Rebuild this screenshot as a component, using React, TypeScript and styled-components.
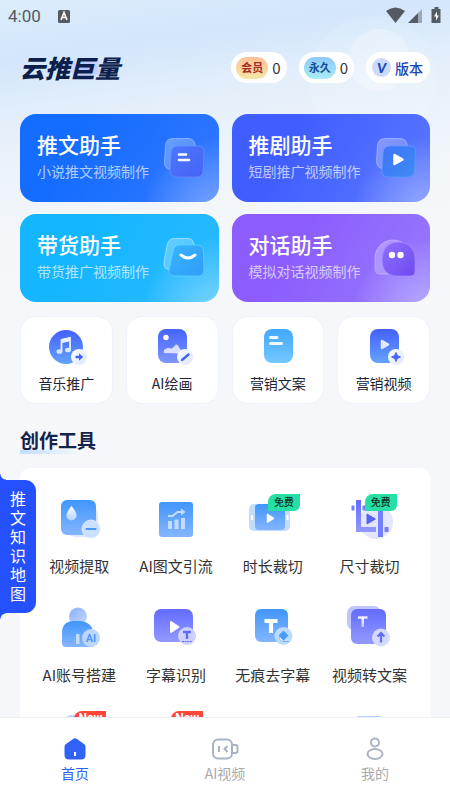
import React from "react";
import styled, { createGlobalStyle, css } from "styled-components";

const GlobalStyle = createGlobalStyle`
  * { box-sizing: border-box; }
  body {
    margin: 0;
    font-family: "Noto Sans CJK SC", "Noto Sans", sans-serif;
    color: #333;
  }
  button { font: inherit; color: inherit; border: 0; padding: 0; margin: 0; background: none; cursor: pointer; }
  svg { display: block; flex: none; }
  h1, h2, p { margin: 0; }
`;

const Page = styled.div`
  position: relative;
  display: flex;
  flex-direction: column;
  height: 100vh;
  overflow: hidden;
  background: linear-gradient(172deg, #dcecfb 0, #d3e6fc 60px, #e6f0fa 130px, #f4f7fa 240px, #f6f7fa 320px);
`;

const Orbs = styled.svg`
  position: absolute;
  top: 0;
  right: 0;
`;

const StatusBar = styled.div`
  position: relative;
  display: flex;
  align-items: center;
  height: 32px;
  padding: 0 8px;
  color: #555b63;
  font: 17px/32px Roboto, sans-serif;
`;

const StatusIcons = styled.div`
  display: flex;
  margin-left: auto;
`;

const StatusApp = styled.svg`
  margin-left: 16px;
`;

const Header = styled.header`
  position: relative;
  display: flex;
  align-items: center;
  gap: 12px;
  padding: 20px 20px 31px;
`;

const Brand = styled.h1`
  margin-right: auto;
  font-size: 25px;
  line-height: 31px;
  font-weight: 900;
  font-style: italic;
  color: #0c1f4d;
  white-space: nowrap;
  background: radial-gradient(ellipse 20px 12px at 66px 16px, #aebcff 0, #c5d2ff 60%, transparent 100%);
`;

const Pill = styled.button`
  display: flex;
  align-items: center;
  gap: 4px;
  height: 31px;
  padding: 0 6px 0 5px;
  border-radius: 16px;
  background: #fff;
  font-size: 15px;
  line-height: 28px;
  white-space: nowrap;
`;

const Tag = styled.span<{ $tone: "gold" | "sky" }>`
  height: 22px;
  padding: 0 5px;
  border-radius: 11px;
  font-size: 11px;
  line-height: 21px;
  font-weight: 700;
  ${(p) =>
    p.$tone === "gold"
      ? css`color: #a12c26; background: linear-gradient(#ffc199, #f5e6a5);`
      : css`color: #174a90; background: linear-gradient(#8ec8ff, #a9ecf3);`}
`;

const Version = styled(Pill)`
  padding: 0 7px 0 6px;
  font-size: 14px;
  font-weight: 500;
  color: #1a46b8;
`;

const VersionMark = styled.span`
  width: 19px;
  height: 19px;
  border-radius: 50%;
  background: #cbd9fb;
  font: italic 900 14px/19px Lato, sans-serif;
  text-align: center;
`;

const Content = styled.main`
  position: relative;
  flex: 1;
  min-height: 0;
  overflow-y: auto;
  scrollbar-width: none;
  padding: 0 20px;
`;

const HeroGrid = styled.div`
  display: grid;
  grid-template-columns: 1fr 1fr;
  gap: 12px 13px;
`;

const HeroCard = styled.button<{ $from: string; $to: string; $glow: string }>`
  display: flex;
  align-items: center;
  justify-content: space-between;
  height: 88px;
  padding: 0 14px 0 17px;
  border-radius: 16px;
  text-align: left;
  color: #fff;
  background:
    radial-gradient(circle at 100% 115%, ${(p) => p.$glow} 0, transparent 78px),
    linear-gradient(120deg, ${(p) => p.$from} 30%, ${(p) => p.$to});
`;

const HeroText = styled.span`
  display: flex;
  flex-direction: column;
  gap: 2px;
  padding-bottom: 5px;
  white-space: nowrap;
`;

const HeroTitle = styled.span`
  font-size: 21px;
  line-height: 28px;
  font-weight: 500;
`;

const HeroNote = styled.span`
  font-size: 14px;
  line-height: 22px;
  opacity: 0.65;
`;

const QuickGrid = styled.div`
  display: grid;
  grid-template-columns: repeat(4, 1fr);
  gap: 13px;
  margin-top: 14px;
`;

const QuickCard = styled.button`
  display: flex;
  flex-direction: column;
  align-items: center;
  gap: 5px;
  height: 88px;
  padding-top: 10px;
  border: 1px solid #eef3fb;
  border-radius: 16px;
  background: #fff;
  font-size: 14px;
  line-height: 22px;
  color: #1d2536;
`;

const SectionTitle = styled.h2`
  width: max-content;
  margin: 21px 0 14px;
  font-size: 19px;
  line-height: 29px;
  font-weight: 700;
  color: #13234a;
  background: linear-gradient(90deg, #bfe0ff, transparent 80%) 0 25px / 100% 5px no-repeat;
`;

const ToolPanel = styled.div`
  display: grid;
  grid-template-columns: repeat(4, 1fr);
  row-gap: 22px;
  padding: 24px 12px 24px 11px;
  border-radius: 10px;
  background: #fff;
`;

const Tool = styled.button`
  display: flex;
  flex-direction: column;
  align-items: center;
  gap: 14px;
  height: 87px;
  font-size: 15px;
  line-height: 24px;
  white-space: nowrap;
  color: #333;
`;

const ToolArt = styled.span`
  position: relative;
  width: 56px;
  height: 48px;
`;

const Badge = styled.span<{ $hot?: boolean }>`
  position: absolute;
  top: 2px;
  right: 1px;
  width: 32px;
  height: 17px;
  border-radius: 8px 0 6px 0;
  font-size: 10px;
  line-height: 16px;
  font-weight: 500;
  text-align: center;
  color: #0d3325;
  background: #25dfa4;
  ${(p) =>
    p.$hot &&
    css`
      top: 1px;
      font: 700 12px/15px Roboto, sans-serif;
      color: #fff;
      background: #ff463c;
    `}
`;

const SideTab = styled.button`
  position: absolute;
  left: 0;
  top: 60%;
  width: 36px;
  padding: 9px 10px 10px;
  border-radius: 0 11px 11px 0;
  background: #2450ff;
  color: #fff;
  font-size: 16px;
  line-height: 19px;
  word-break: break-all;
  &::before, &::after {
    content: "";
    position: absolute;
    left: 0;
    width: 6px;
    height: 6px;
  }
  &::before {
    bottom: 100%;
    background: radial-gradient(circle at 100% 0, transparent 5px, #2450ff 6px);
  }
  &::after {
    top: 100%;
    background: radial-gradient(circle at 100% 100%, transparent 5px, #2450ff 6px);
  }
`;

const TabBar = styled.nav`
  position: relative;
  display: grid;
  grid-template-columns: repeat(3, 1fr);
  height: 83px;
  border-top: 1px solid #edeff2;
  background: #fff;
`;

const TabItem = styled.button<{ $active?: boolean }>`
  display: flex;
  flex-direction: column;
  align-items: center;
  gap: 2px;
  padding-top: 19px;
  font-size: 14px;
  line-height: 20px;
  color: ${(p) => (p.$active ? "#2f62f5" : "#aaa")};
`;

const Gradients = () => (
  <svg width="0" height="0" aria-hidden>
    <defs>
      <linearGradient id="indigo" x2="0" y2="1"><stop stopColor="#4464fb" /><stop offset="1" stopColor="#7f96ff" /></linearGradient>
      <linearGradient id="blue" x2="0" y2="1"><stop stopColor="#4096fc" /><stop offset="1" stopColor="#85b5ff" /></linearGradient>
      <linearGradient id="mix" x2="0" y2="1"><stop stopColor="#4460fa" /><stop offset="1" stopColor="#62a3fd" /></linearGradient>
      <linearGradient id="sky" x2="0" y2="1"><stop stopColor="#42a7ff" /><stop offset="1" stopColor="#74c8ff" /></linearGradient>
      <linearGradient id="violet" x2="0" y2="1"><stop stopColor="#636cff" /><stop offset="1" stopColor="#929aff" /></linearGradient>
      <linearGradient id="pale" x2="0" y2="1"><stop stopColor="#fff" /><stop offset="1" stopColor="#fff" stopOpacity=".5" /></linearGradient>
      <linearGradient id="puck" x2="1" y2="1"><stop stopColor="#fafcff" /><stop offset="1" stopColor="#dde6fb" /></linearGradient>
      <linearGradient id="head" x2="1" y2="1"><stop stopColor="#89aefa" /><stop offset="1" stopColor="#c4dcff" /></linearGradient>
      <linearGradient id="glass" x2="1" y2="1"><stop stopColor="#fff" stopOpacity=".32" /><stop offset="1" stopColor="#fff" stopOpacity=".14" /></linearGradient>
      <linearGradient id="h1" x2="1" y2="1"><stop stopColor="#4a78ff" /><stop offset="1" stopColor="#4862f4" /></linearGradient>
      <linearGradient id="h2" x2="1" y2="1"><stop stopColor="#3f74fa" /><stop offset="1" stopColor="#3d8bf4" /></linearGradient>
      <linearGradient id="h3" x2="1" y2="1"><stop stopColor="#38b4ff" /><stop offset="1" stopColor="#2f9df8" /></linearGradient>
      <linearGradient id="h4" x2="1" y2="1"><stop stopColor="#8f70ff" /><stop offset="1" stopColor="#6e4bf0" /></linearGradient>
    </defs>
  </svg>
);

const heroArt = {
  text: (
    <>
      <path d="M10 1.500h15q6 0 7 6l2 17q0 8-7 8H9q-8 0-7.500-8l1-16q.5-7 7.500-7z" fill="url(#glass)" stroke="#a9caff" strokeOpacity=".6" />
      <path d="M15 9h20q6 0 6 6l-1 19q-.5 6-7 6H14q-7 0-7-6l1-18q.5-7 7-7z" fill="url(#h1)" stroke="#6f93ff" strokeOpacity=".6" />
      <path d="M16 17.500h7M16 23h10" stroke="#fff" strokeWidth="2.600" strokeLinecap="round" />
    </>
  ),
  play: (
    <>
      <path d="M11 1.500h15q6 0 7 6l1 17q0 7-7 7H10q-7.500 0-7.500-8l1-15q.5-7 7.500-7z" fill="url(#glass)" stroke="#b9c6ff" strokeOpacity=".6" />
      <path d="M16 9h20q6 0 5.500 6l-1 19q-.5 6-7 6H14q-6 0-6-6l1-18q.5-7 7-7z" fill="url(#h2)" stroke="#69a0ff" strokeOpacity=".6" />
      <path d="M20.500 18v9l8-4.500z" fill="#fff" stroke="#fff" strokeWidth="2.500" strokeLinejoin="round" />
    </>
  ),
  smile: (
    <>
      <path d="M11 1.500h14q5 0 6 6l3 17q0 8-7 8H7q-7 0-6-8l3-16q1.500-7 7-7z" fill="url(#glass)" stroke="#b6e8ff" strokeOpacity=".7" />
      <path d="M16 8h18q6 0 6.500 6l.5 19q0 6-6 6H12q-7 0-6-6l4-18q1-7 6-7z" fill="url(#h3)" stroke="#5cd4fb" strokeOpacity=".8" />
      <path d="M18 18q7 6 14 0" fill="none" stroke="#fff" strokeWidth="3" strokeLinecap="round" />
    </>
  ),
  ghost: (
    <>
      <path d="M1 21a18 18 0 0 1 36 0v16H6q-5 0-5-5z" fill="url(#glass)" stroke="#c9b6ff" strokeOpacity=".7" />
      <path d="M8 22Q9 5 25 5q16 1 16 18v11q0 5-5 5H22Q8 38 8 22z" fill="url(#h4)" stroke="#a68bff" strokeOpacity=".7" />
      <circle cx="18" cy="18" r="3.200" fill="#fff" />
      <circle cx="26.500" cy="18" r="3.200" fill="#fff" />
    </>
  ),
};

const quickArt = {
  music: (
    <>
      <circle cx="24" cy="20" r="17" fill="url(#mix)" />
      <path d="M19.500 24V13l8.500-2v11.500" fill="none" stroke="#eaf1ff" strokeWidth="1.800" />
      <path d="M19.500 12.200l8.500-2v4l-8.500 2z" fill="#eaf1ff" />
      <ellipse cx="17.500" cy="24.500" rx="3" ry="2.300" fill="#dce8ff" />
      <ellipse cx="26" cy="23" rx="3" ry="2.300" fill="#dce8ff" />
      <circle cx="37" cy="30" r="8" fill="url(#puck)" />
      <path d="M33.500 28.800h3.500v-2.600l4.200 3.800-4.200 3.800v-2.600h-3.500z" fill="#4464f5" />
    </>
  ),
  paint: (
    <>
      <rect x="10" y="2" width="29" height="34" rx="8" fill="url(#indigo)" />
      <circle cx="18" cy="10.500" r="2.700" fill="#fff" />
      <path d="M16 26q-1-4 2-4 2-2 4-.5 1-.5 2 0l3-3q1.500-2 3 0l3 5q1 3-2 3z" fill="#fff" opacity=".75" />
      <circle cx="37" cy="30" r="8" fill="url(#puck)" />
      <path d="M34 33l6.500-5.500" stroke="#4464f5" strokeWidth="2.400" strokeLinecap="round" />
    </>
  ),
  copy: (
    <>
      <rect x="10" y="2" width="29" height="34" rx="8" fill="url(#sky)" />
      <path d="M16.500 10.500h6.500M16.500 16.500h11" stroke="#f0f9ff" strokeWidth="3" strokeLinecap="round" />
    </>
  ),
  video: (
    <>
      <rect x="10" y="2" width="29" height="34" rx="8" fill="url(#mix)" />
      <path d="M22 14v7l6-3.500z" fill="#e2e9ff" stroke="#e2e9ff" strokeWidth="2.500" strokeLinejoin="round" />
      <circle cx="36" cy="30" r="8" fill="url(#puck)" />
      <path d="M36 25.500q.6 3.900 4.500 4.500-3.900.6-4.500 4.500-.6-3.900-4.500-4.500 3.900-.6 4.500-4.500z" fill="#4464f5" stroke="#4464f5" />
    </>
  ),
};

const toolArt = {
  extract: (
    <>
      <rect x="14" y="13" width="33" height="32" rx="10" fill="#dbe8ff" />
      <rect x="10" y="8" width="35" height="35" rx="6" fill="url(#blue)" />
      <path d="M20.500 14q5 6 5 9.500a5 5 0 0 1-10 0q0-3.500 5-9.500z" fill="url(#pale)" />
      <circle cx="40" cy="37" r="9" fill="#cbdffe" stroke="#dceaff" />
      <path d="M35.500 37h9" stroke="#4c97fb" strokeWidth="2.200" strokeLinecap="round" />
    </>
  ),
  chart: (
    <>
      <rect x="11" y="10" width="34" height="35" rx="3" fill="url(#blue)" />
      <path d="M20 29h4v8h-4zM26.500 27.500h4V37h-4zM33 26h4v11h-4z" fill="#c3dcff" />
      <path d="M20 24h4.500l5-4H35" fill="none" stroke="#c3dcff" strokeWidth="2.200" />
      <path d="M33 16.500l4.500 3.500-4.500 3.500z" fill="#c3dcff" />
    </>
  ),
  trim: (
    <>
      <rect x="4" y="12" width="41" height="27" rx="5" fill="#c2dbff" />
      <path d="M7 23v5M42.500 23v5" stroke="#fff" strokeWidth="2" />
      <rect x="10" y="12" width="30" height="26" rx="4" fill="url(#blue)" />
      <path d="M22.500 22.500v7.500l6-3.700z" fill="#fff" stroke="#fff" strokeWidth="1.500" strokeLinejoin="round" />
    </>
  ),
  crop: (
    <>
      <circle cx="34" cy="30" r="17" fill="#e4e6ff" />
      <path d="M14 8h5v27h15v5H14z" fill="url(#violet)" />
      <path d="M9.500 13.500h3v5h-3zM20.500 13.500H41V45h-5V18.500H20.500zM42.500 35h4v5h-4z" fill="#757efd" />
      <path d="M25 22v10l8.500-5z" fill="#5761f3" stroke="#5761f3" strokeLinejoin="round" />
    </>
  ),
  account: (
    <>
      <circle cx="27" cy="15.500" r="9" fill="url(#head)" />
      <path d="M11 32q0-12 12-12h7q12 2 12 12v14H15q-4 0-4-4z" fill="url(#blue)" />
      <path d="M25 33h3.500v10H25z" fill="#c5deff" />
      <circle cx="40" cy="37" r="9" fill="#bcd7fe" />
      <text x="40" y="41" textAnchor="middle" fontFamily="Roboto, sans-serif" fontSize="11" fontWeight="700" fill="#5298f8">AI</text>
    </>
  ),
  subtitle: (
    <>
      <rect x="6" y="8" width="39" height="33" rx="7" fill="url(#violet)" />
      <path d="M23 21v10l7.500-5z" fill="#fff" stroke="#fff" strokeWidth="2" strokeLinejoin="round" />
      <circle cx="39" cy="35" r="9" fill="#ccd2fd" />
      <path d="M35 31h8M39 31v7" stroke="#626bf5" strokeWidth="2.400" />
      <path d="M34 40.500h10" stroke="#626bf5" strokeDasharray="2 .6" />
    </>
  ),
  erase: (
    <>
      <rect x="10" y="8" width="33" height="33" rx="6" fill="url(#blue)" />
      <path d="M19.500 20h13M26 20v12" stroke="#fff" strokeWidth="4.200" />
      <circle cx="38.500" cy="35" r="9" fill="#bcdcff" />
      <path d="M38.500 29.500l5 5-5 5-5-5z" fill="#4a9afb" />
      <path d="M35 36l3.500 3.500-1.500 1-3-3zM38 40.500h6" fill="#fff" stroke="#76b2fc" />
    </>
  ),
  convert: (
    <>
      <rect x="5" y="5" width="34" height="24" rx="7" fill="#bfc6ff" />
      <rect x="9" y="8" width="35" height="35" rx="6" fill="url(#violet)" />
      <path d="M16 16.500h9.500" stroke="#eff0ff" strokeWidth="2.400" />
      <path d="M19.500 17h2.500v9h-2.500z" fill="url(#pale)" />
      <circle cx="39" cy="36.500" r="9" fill="#d4d9ff" />
      <path d="M39 41.500v-9M35.500 35.500l3.500-3.500 3.500 3.500" fill="none" stroke="#626bf5" strokeWidth="2.200" />
    </>
  ),
  bubble: <circle cx="21" cy="14" r="9" fill="#b5d1fb" />,
  blank: null,
  sheet: <rect x="14" y="6" width="26" height="34" rx="3" fill="#b3d5ff" />,
};

const heroes = [
  { title: "推文助手", note: "小说推文视频制作", art: "text", from: "#156dff", to: "#3377ff", glow: "#7ea8ff" },
  { title: "推剧助手", note: "短剧推广视频制作", art: "play", from: "#405eff", to: "#5b79ff", glow: "#9caeff" },
  { title: "带货助手", note: "带货推广视频制作", art: "smile", from: "#13b6ff", to: "#2cb9ff", glow: "#80d6ff" },
  { title: "对话助手", note: "模拟对话视频制作", art: "ghost", from: "#8c5cfc", to: "#957bff", glow: "#bbadff" },
] as const;

const quicks = [
  { label: "音乐推广", art: "music" },
  { label: "AI绘画", art: "paint" },
  { label: "营销文案", art: "copy" },
  { label: "营销视频", art: "video" },
] as const;

type ToolEntry = { label: string; art: keyof typeof toolArt; badge?: string; hot?: boolean };

const tools: ToolEntry[] = [
  { label: "视频提取", art: "extract" },
  { label: "AI图文引流", art: "chart" },
  { label: "时长裁切", art: "trim", badge: "免费" },
  { label: "尺寸裁切", art: "crop", badge: "免费" },
  { label: "AI账号搭建", art: "account" },
  { label: "字幕识别", art: "subtitle" },
  { label: "无痕去字幕", art: "erase" },
  { label: "视频转文案", art: "convert" },
  { label: "", art: "bubble", badge: "New", hot: true },
  { label: "", art: "blank", badge: "New", hot: true },
  { label: "", art: "blank" },
  { label: "", art: "sheet" },
];

export default function App() {
  return (
    <>
      <GlobalStyle />
      <Page>
        <Orbs width="150" height="130" aria-hidden>
          <circle cx="73" cy="80" r="64" fill="#fff" opacity=".1" />
          <circle cx="79" cy="60" r="31" fill="#fff" opacity=".28" />
        </Orbs>
        <StatusBar>
          4:00
          <StatusApp width="14" height="14" viewBox="0 0 14 14">
            <rect x="1" y="1" width="12" height="13" rx="1.500" fill="#555b63" />
            <path d="M4 11l3-7.500L10 11M5.200 8.500h3.600" fill="none" stroke="#fff" strokeWidth="1.600" />
          </StatusApp>
          <StatusIcons>
            <svg width="58" height="18" viewBox="0 0 58 18" fill="#555b63">
              <path d="M2 4q9.500-7 19 0l-9.500 12z" />
              <path d="M24 16L34 6v10z" />
              <path d="M34 6l4-4v14h-4z" opacity=".45" />
              <path d="M50.500 0h4v2h2v14h-9V2h3z" />
              <path d="M53 4.500l-3 5h2v4l3-5h-2z" fill="#fff" />
            </svg>
          </StatusIcons>
        </StatusBar>
        <Header>
          <Brand>云推巨量</Brand>
          <Pill><Tag $tone="gold">会员</Tag>0</Pill>
          <Pill><Tag $tone="sky">永久</Tag>0</Pill>
          <Version><VersionMark>V</VersionMark>版本</Version>
        </Header>
        <Content>
          <Gradients />
          <HeroGrid>
            {heroes.map((h) => (
              <HeroCard key={h.title} $from={h.from} $to={h.to} $glow={h.glow}>
                <HeroText>
                  <HeroTitle>{h.title}</HeroTitle>
                  <HeroNote>{h.note}</HeroNote>
                </HeroText>
                <svg width="42" height="42" viewBox="0 0 42 42" aria-hidden>{heroArt[h.art]}</svg>
              </HeroCard>
            ))}
          </HeroGrid>
          <QuickGrid>
            {quicks.map((q) => (
              <QuickCard key={q.label}>
                <svg width="48" height="40" viewBox="0 0 48 40" aria-hidden>{quickArt[q.art]}</svg>
                {q.label}
              </QuickCard>
            ))}
          </QuickGrid>
          <SectionTitle>创作工具</SectionTitle>
          <ToolPanel>
            {tools.map((t, i) => (
              <Tool key={i}>
                <ToolArt>
                  <svg width="56" height="48" viewBox="0 0 56 48" aria-hidden>{toolArt[t.art]}</svg>
                  {t.badge && <Badge $hot={t.hot}>{t.badge}</Badge>}
                </ToolArt>
                {t.label}
              </Tool>
            ))}
          </ToolPanel>
        </Content>
        <SideTab>推文知识地图</SideTab>
        <TabBar>
          <TabItem $active aria-current="page">
            <svg width="28" height="24" viewBox="0 0 28 24" aria-hidden>
              <path d="M12 2q2-1.500 4 0l7 5q1.500 1 1.500 3v8q0 4.500-4.500 4.500H8q-4.500 0-4.500-4.500v-8q0-2 1.500-3z" fill="#2f62f5" />
              <path d="M14 15v4" stroke="#fff" strokeWidth="2" />
            </svg>
            首页
          </TabItem>
          <TabItem>
            <svg width="28" height="24" viewBox="0 0 28 24" fill="none" stroke="#a9b3c6" strokeWidth="2" aria-hidden>
              <rect x="2" y="2.500" width="19" height="19" rx="5" />
              <path d="M22 8h2.500q2 0 2 2v4q0 2-2 2H22M8 9v6M16.500 9L13.500 12l3 3" />
            </svg>
            AI视频
          </TabItem>
          <TabItem>
            <svg width="28" height="24" viewBox="0 0 28 24" fill="none" stroke="#a9b3c6" strokeWidth="2" aria-hidden>
              <circle cx="14" cy="5.500" r="4" />
              <ellipse cx="14" cy="17" rx="7.500" ry="5" />
            </svg>
            我的
          </TabItem>
        </TabBar>
      </Page>
    </>
  );
}
